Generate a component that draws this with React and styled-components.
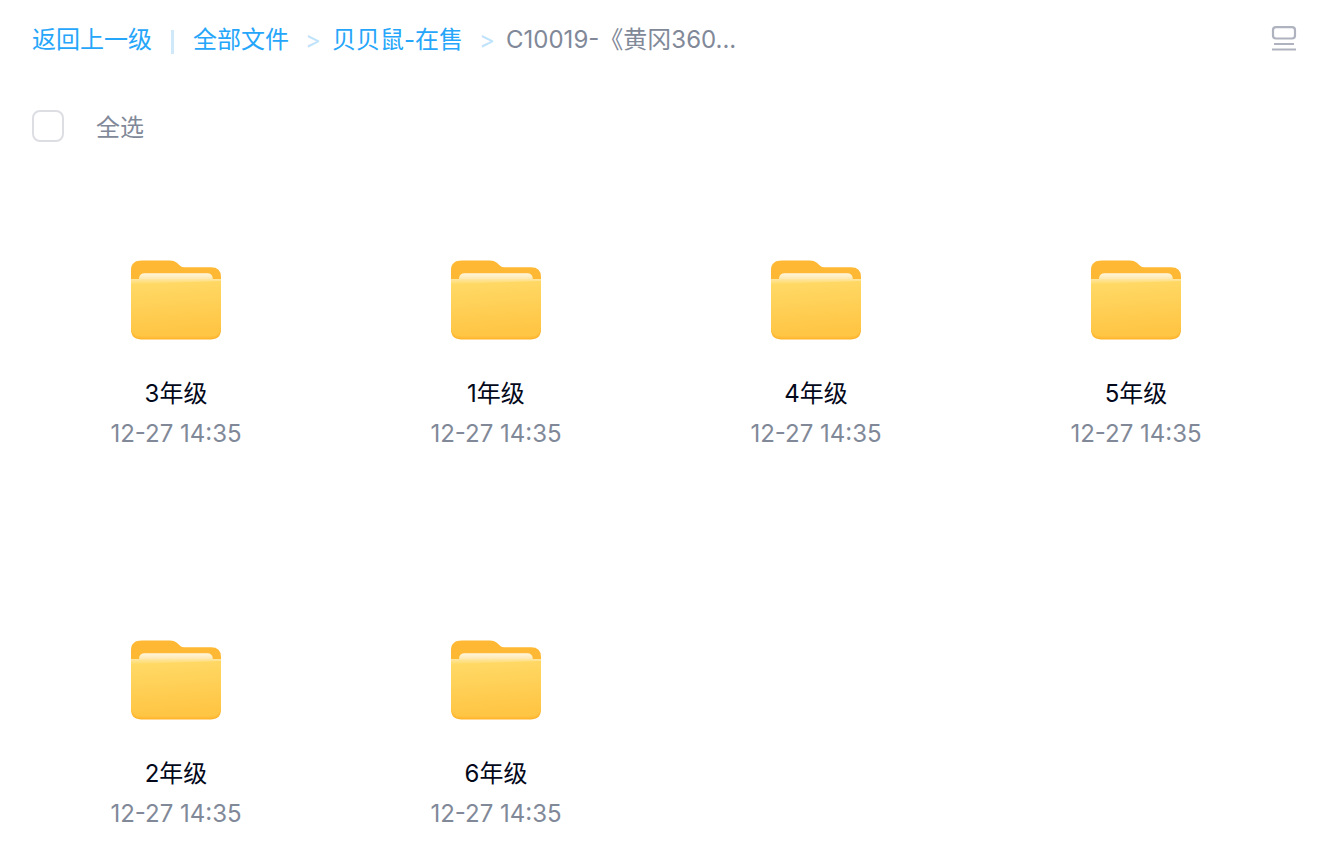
import React, { useState } from "react";
import styled, { createGlobalStyle } from "styled-components";

const folders = [
  { name: "3年级", time: "12-27 14:35" },
  { name: "1年级", time: "12-27 14:35" },
  { name: "4年级", time: "12-27 14:35" },
  { name: "5年级", time: "12-27 14:35" },
  { name: "2年级", time: "12-27 14:35" },
  { name: "6年级", time: "12-27 14:35" },
];

const FolderIcon = () => (
  <FolderSvg viewBox="0 0 112 100" aria-hidden="true">
    <defs>
      <linearGradient id="front" x1="0" y1="0" x2="0.12" y2="1">
        <stop offset="0" stopColor="#ffdb69" />
        <stop offset="1" stopColor="#ffc544" />
      </linearGradient>
      <linearGradient id="paper" x1="0" y1="0" x2="0" y2="1">
        <stop offset="0" stopColor="#fff6df" />
        <stop offset="1" stopColor="#ffe093" />
      </linearGradient>
      <linearGradient id="edge" x1="0" y1="0" x2="0" y2="1">
        <stop offset="0" stopColor="#ffe6a0" />
        <stop offset="1" stopColor="#ffdb69" />
      </linearGradient>
    </defs>
    <path
      d="M11 40V20Q11 10.500 22 10.500H50Q54 10.500 56.500 12.500L61 16.500Q62 17.300 64 17.300H91Q101 17.300 101 27V40Z"
      fill="#ffb833"
    />
    <path d="M19 32V29Q19 23.300 25 23.300H87Q92.800 23.300 92.800 29V32Z" fill="url(#paper)" />
    <path d="M11 29H101V79Q101 89.500 90.500 89.500H21.500Q11 89.500 11 79Z" fill="#ffb52e" />
    <path d="M11 29H101V78Q101 88 90.500 88H21.500Q11 88 11 78Z" fill="#ffbd3a" />
    <path d="M11 29H101V77Q101 86.500 90.500 86.500H21.500Q11 86.500 11 77Z" fill="url(#front)" />
    <path d="M11 29H101V31L11 34Z" fill="url(#edge)" />
  </FolderSvg>
);

const ListIcon = () => (
  <svg width="32" height="32" viewBox="0 0 32 32" fill="none" stroke="#afb3bf" strokeWidth="2.2" aria-hidden="true">
    <rect x="5" y="3.2" width="22" height="11.3" rx="3" />
    <path d="M6 20H26M4 25.500H28" />
  </svg>
);

const App = () => {
  const [checked, setChecked] = useState(false);

  return (
    <Page>
      <GlobalStyle />
      <Header>
        <Breadcrumb aria-label="路径">
          <Crumb href="#back">返回上一级</Crumb>
          <Divider />
          <Crumb href="#all">全部文件</Crumb>
          <Arrow>&gt;</Arrow>
          <Crumb href="#beibeishu">贝贝鼠-在售</Crumb>
          <Arrow>&gt;</Arrow>
          <Current>C10019-《黄冈360...</Current>
        </Breadcrumb>
        <ViewButton type="button" aria-label="切换视图">
          <ListIcon />
        </ViewButton>
      </Header>
      <SelectRow>
        <Checkbox
          id="select-all"
          type="checkbox"
          checked={checked}
          onChange={(e) => setChecked(e.target.checked)}
        />
        <SelectLabel htmlFor="select-all">全选</SelectLabel>
      </SelectRow>
      <Grid>
        {folders.map((folder) => (
          <Folder key={folder.name}>
            <FolderIcon />
            <Name>{folder.name}</Name>
            <Time>{folder.time}</Time>
          </Folder>
        ))}
      </Grid>
    </Page>
  );
};

const GlobalStyle = createGlobalStyle`
  * {
    box-sizing: border-box;
  }

  body {
    margin: 0;
    background: #ffffff;
    font-family: Inter, "Noto Sans CJK SC", sans-serif;
    font-size: 24px;
    line-height: 40px;
    color: #818999;
  }
`;

const Page = styled.main`
  padding-bottom: 24px;
`;

const Header = styled.header`
  display: flex;
  align-items: center;
  justify-content: space-between;
  height: 80px;
  padding: 0 44px 0 32px;
`;

const Breadcrumb = styled.nav`
  display: flex;
  align-items: center;
  white-space: nowrap;
`;

const Crumb = styled.a`
  color: #26a6fa;
  text-decoration: none;
`;

const Divider = styled.span`
  width: 3px;
  height: 24px;
  margin: 4px 19px 0;
  background: #cfe9fb;
`;

const Arrow = styled.span`
  width: 16px;
  margin: 0 11px 0 16px;
  color: #bfe3fb;
`;

const Current = styled.span`
  color: #818999;
`;

const ViewButton = styled.button`
  display: flex;
  padding: 0;
  border: none;
  background: none;
  cursor: pointer;
`;

const SelectRow = styled.div`
  display: flex;
  align-items: center;
  gap: 32px;
  height: 92px;
  padding: 0 32px;
`;

const SelectLabel = styled.label`
  padding-top: 4px;
`;

const Checkbox = styled.input`
  appearance: none;
  width: 32px;
  height: 32px;
  margin: 0;
  border: 2px solid #dddee3;
  border-radius: 8px;
  background: #ffffff;
  cursor: pointer;

  &:checked {
    border-color: #26a6fa;
    background: #26a6fa;
  }
`;

const Grid = styled.ul`
  display: grid;
  grid-template-columns: repeat(auto-fill, 320px);
  row-gap: 176px;
  margin: 0;
  padding: 78px 16px 0;
  list-style: none;
`;

const Folder = styled.li`
  display: flex;
  flex-direction: column;
  align-items: center;
`;

const FolderSvg = styled.svg`
  width: 112px;
  height: 100px;
  margin-bottom: 24px;
`;

const Name = styled.span`
  color: #03081a;
`;

const Time = styled.span`
  color: #818999;
`;

export default App;
